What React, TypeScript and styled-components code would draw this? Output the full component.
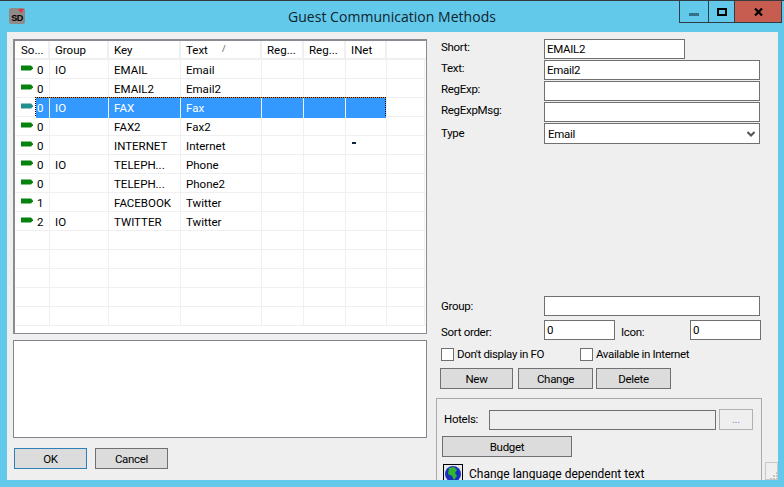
import React from "react";
import styled, { createGlobalStyle } from "styled-components";

const GlobalStyle = createGlobalStyle`
  html, body {
    margin: 0;
    padding: 0;
    background: #63c9eb;
  }
  * {
    box-sizing: border-box;
  }
`;

const columns = "35px 59px 72px 81px 42px 42px 41px 38px";

const rows = [
  { sort: "0", group: "IO", key: "EMAIL", text: "Email" },
  { sort: "0", group: "", key: "EMAIL2", text: "Email2" },
  { sort: "0", group: "IO", key: "FAX", text: "Fax", selected: true },
  { sort: "0", group: "", key: "FAX2", text: "Fax2" },
  { sort: "0", group: "", key: "INTERNET", text: "Internet", inet: true },
  { sort: "0", group: "IO", key: "TELEPH...", text: "Phone" },
  { sort: "0", group: "", key: "TELEPH...", text: "Phone2" },
  { sort: "1", group: "", key: "FACEBOOK", text: "Twitter" },
  { sort: "2", group: "IO", key: "TWITTER", text: "Twitter" },
];

const Arrow = ({ color }: { color: string }) => (
  <svg width="12" height="6" viewBox="0 0 12 6">
    <path d="M0 0.5H10L12 2.5V3.5L10 5.5H0Z" fill={color} />
  </svg>
);

function App() {
  return (
    <Window>
      <GlobalStyle />
      <TitleBar>
        <AppIcon>
          SD
          <svg width="6" height="4" viewBox="0 0 6 4">
            <path d="M0 0H6L3 4Z" fill="#e0304a" />
          </svg>
        </AppIcon>
        <Title>Guest Communication Methods</Title>
        <Controls>
          <ControlButton>
            <MinimizeIcon width="10" height="3" viewBox="0 0 10 3">
              <rect width="10" height="3" fill="#34708a" />
            </MinimizeIcon>
          </ControlButton>
          <ControlButton $w={26}>
            <svg width="10" height="8" viewBox="0 0 10 8">
              <rect x="1" y="1" width="8" height="6" fill="none" stroke="#000" strokeWidth="2" />
            </svg>
          </ControlButton>
          <ControlButton $w={47} $close>
            <svg width="9" height="8" viewBox="0 0 9 8">
              <path d="M1 0.5L8 7.5M8 0.5L1 7.5" stroke="#000" strokeWidth="2.2" />
            </svg>
          </ControlButton>
        </Controls>
      </TitleBar>
      <Client>
        <LeftColumn>
          <Grid>
            <HeaderRow>
              <HeaderCell>So...</HeaderCell>
              <HeaderCell>Group</HeaderCell>
              <HeaderCell>Key</HeaderCell>
              <HeaderCell>
                Text
                <SortMark>/</SortMark>
              </HeaderCell>
              <HeaderCell>Reg...</HeaderCell>
              <HeaderCell>Reg...</HeaderCell>
              <HeaderCell>INet</HeaderCell>
            </HeaderRow>
            {rows.map((r, i) => (
              <Row key={i}>
                <SortCell>
                  <ArrowSlot>
                    <Arrow color={r.selected ? "#1f8f8f" : "#08820f"} />
                  </ArrowSlot>
                  <SortValue $selected={r.selected}>{r.sort}</SortValue>
                </SortCell>
                <Cell $selected={r.selected}>{r.group}</Cell>
                <Cell $selected={r.selected}>{r.key}</Cell>
                <Cell $selected={r.selected}>{r.text}</Cell>
                <Cell $selected={r.selected} />
                <Cell $selected={r.selected} />
                <Cell $selected={r.selected}>{r.inet && <InetMark />}</Cell>
                <Cell />
                {r.selected && <FocusFrame />}
              </Row>
            ))}
            {Array.from({ length: 5 }).map((_, i) => (
              <Row key={i}>
                {Array.from({ length: 8 }).map((_, j) => (
                  <Cell key={j} />
                ))}
              </Row>
            ))}
          </Grid>
          <Memo />
          <DialogButtons>
            <Button $default>OK</Button>
            <Button>Cancel</Button>
          </DialogButtons>
        </LeftColumn>
        <RightColumn>
          <FieldGrid>
            <FieldLabel>Short:</FieldLabel>
            <TextBox $w={141} readOnly value="EMAIL2" />
            <FieldLabel>Text:</FieldLabel>
            <TextBox readOnly value="Email2" />
            <FieldLabel>RegExp:</FieldLabel>
            <TextBox readOnly value="" />
            <FieldLabel>RegExpMsg:</FieldLabel>
            <TextBox readOnly value="" />
            <TypeLabel>Type</TypeLabel>
            <ComboBox>
              Email
              <svg width="8" height="6" viewBox="0 0 8 6">
                <path d="M0.5 1L4 4.5L7.5 1" fill="none" stroke="#555" strokeWidth="2" />
              </svg>
            </ComboBox>
          </FieldGrid>
          <LowerFields>
            <GroupRow>
              <FieldLabel>Group:</FieldLabel>
              <TextBox readOnly value="" />
            </GroupRow>
            <SortRow>
              <FieldLabel>Sort order:</FieldLabel>
              <SmallBox readOnly value="0" />
              <IconLabel>Icon:</IconLabel>
              <SmallBox readOnly value="0" />
            </SortRow>
            <CheckRow>
              <CheckLabel $w={139}>
                <CheckBox />
                Don't display in FO
              </CheckLabel>
              <CheckLabel>
                <CheckBox />
                Available in Internet
              </CheckLabel>
            </CheckRow>
            <ActionRow>
              <Button>New</Button>
              <Button $w={75}>Change</Button>
              <Button $w={75}>Delete</Button>
            </ActionRow>
          </LowerFields>
          <GroupBox>
            <HotelRow>
              <FieldLabel>Hotels:</FieldLabel>
              <DisabledBox />
              <EllipsisButton>...</EllipsisButton>
            </HotelRow>
            <Button $w={130}>Budget</Button>
            <LanguageRow>
              <GlobeButton>
                <svg width="16" height="16" viewBox="0 0 16 16">
                  <circle cx="8" cy="8" r="8" fill="#1a2fc0" />
                  <path d="M4 2L9 1L12 4L10 7L12 10L9 14L7 10L3 8Z" fill="#2fb52f" />
                </svg>
              </GlobeButton>
              Change language dependent text
            </LanguageRow>
          </GroupBox>
        </RightColumn>
        <ResizeGrip>
          <svg width="8" height="8" viewBox="0 0 8 8">
            <path d="M6 0h2v2H6zM3 3h2v2H3zM6 3h2v2H6zM0 6h2v2H0zM3 6h2v2H3zM6 6h2v2H6z" fill="#c4c4c4" />
          </svg>
        </ResizeGrip>
      </Client>
    </Window>
  );
}

export default App;

const Window = styled.div`
  width: 784px;
  height: 487px;
  overflow: hidden;
  display: flex;
  flex-direction: column;
  background: #63c9eb;
  border-top: 1px solid #333b40;
  font-family: Roboto, "Liberation Sans", Arial, sans-serif;
  font-size: 11.5px;
  color: #000;
`;

const TitleBar = styled.div`
  position: relative;
  flex: 0 0 31px;
  display: flex;
  justify-content: center;
  padding-top: 6px;
`;

const AppIcon = styled.div`
  position: absolute;
  left: 9px;
  top: 7px;
  width: 16px;
  height: 16px;
  border-radius: 2px;
  background: #8f8a88;
  font-family: "Liberation Sans", sans-serif;
  font-size: 9px;
  font-weight: bold;
  line-height: 20px;
  text-align: center;
  letter-spacing: -0.5px;
  svg {
    position: absolute;
    right: 1px;
    top: 1px;
  }
`;

const Title = styled.div`
  font-family: "Open Sans", sans-serif;
  font-size: 14px;
  line-height: 20px;
  letter-spacing: 0.03px;
  color: #10232c;
`;

const Controls = styled.div`
  position: absolute;
  top: 0;
  left: 679px;
  display: flex;
  height: 22px;
  border: 1px solid #2d3c45;
  border-top: none;
`;

const ControlButton = styled.div<{ $w?: number; $close?: boolean }>`
  width: ${(p) => p.$w ?? 28}px;
  display: flex;
  align-items: center;
  justify-content: center;
  background: ${(p) => (p.$close ? "#c75c50" : "transparent")};
  border-left: 1px solid #2d3c45;
  &:first-child {
    border-left: none;
  }
`;

const MinimizeIcon = styled.svg`
  margin-top: 5px;
`;

const Client = styled.div`
  position: relative;
  flex: 0 0 448px;
  margin: 0 6px 0 7px;
  display: flex;
  background: #efefef;
  overflow: hidden;
`;

const LeftColumn = styled.div`
  width: 420px;
  padding: 7px 0 0 6px;
`;

const Grid = styled.div`
  width: 414px;
  height: 295px;
  overflow: hidden;
  background: #fff;
  border: 2px solid #8a8a92;
  border-right-width: 1px;
  border-bottom-width: 1px;
`;

const HeaderRow = styled.div`
  display: grid;
  grid-template-columns: 35px 59px 72px 81px 42px 42px 41px;
  height: 19px;
  border-bottom: 2px solid #f0f0f0;
`;

const HeaderCell = styled.div`
  position: relative;
  padding-left: 5px;
  line-height: 19px;
  white-space: nowrap;
  border-right: 2px solid #f0f0f0;
  &:first-child {
    padding-left: 6px;
  }
`;

const SortMark = styled.span`
  position: absolute;
  left: 41px;
  top: -1px;
  font-size: 9px;
  color: #555;
`;

const Row = styled.div`
  position: relative;
  display: grid;
  grid-template-columns: ${columns};
  height: 19px;
  border-bottom: 1px solid #f0f0f0;
`;

const Cell = styled.div<{ $selected?: boolean }>`
  padding-left: 5px;
  line-height: 20px;
  white-space: nowrap;
  overflow: hidden;
  border-right: 1px solid #f0f0f0;
  background: ${(p) => (p.$selected ? "#3399ff" : "transparent")};
  color: ${(p) => (p.$selected ? "#fff" : "#000")};
`;

const SortCell = styled.div`
  display: flex;
  align-items: stretch;
  border-right: 1px solid #f0f0f0;
`;

const ArrowSlot = styled.div`
  flex: 0 0 21px;
  padding: 5px 0 0 6px;
  line-height: 0;
`;

const SortValue = styled.div<{ $selected?: boolean }>`
  flex: 1;
  line-height: 20px;
  padding-left: 1px;
  background: ${(p) => (p.$selected ? "#3399ff" : "transparent")};
  color: ${(p) => (p.$selected ? "#fff" : "#000")};
`;

const FocusFrame = styled.div`
  position: absolute;
  left: 20px;
  top: -1px;
  width: 351px;
  height: 19px;
  border-top: 1px dotted #000;
  border-left: 1px dotted #000;
  border-right: 1px dotted #000;
  background: linear-gradient(#e8901a, #e8901a) top / 100% 1px no-repeat;
  background-origin: border-box;
`;

const InetMark = styled.span`
  display: block;
  width: 4px;
  height: 2px;
  margin: 6px 0 0 1px;
  background: #10233c;
`;

const Memo = styled.div`
  width: 414px;
  height: 98px;
  margin-top: 6px;
  background: #fff;
  border: 1px solid #84848c;
`;

const DialogButtons = styled.div`
  display: flex;
  gap: 8px;
  margin: 10px 0 0 1px;
`;

const Button = styled.div<{ $w?: number; $default?: boolean }>`
  width: ${(p) => p.$w ?? 73}px;
  height: 21px;
  line-height: 21px;
  text-align: center;
  letter-spacing: -0.3px;
  background: #dcdcdc;
  border: 1px solid ${(p) => (p.$default ? "#2f7fb8" : "#707070")};
`;

const RightColumn = styled.div`
  flex: 1;
  padding: 7px 0 0 9px;
  display: flex;
  flex-direction: column;
  letter-spacing: -0.3px;
`;

const FieldGrid = styled.div`
  display: grid;
  grid-template-columns: 103px 216px;
  grid-auto-rows: 20px;
  row-gap: 1px;
  margin-left: 5px;
`;

const FieldLabel = styled.div`
  line-height: 16px;
  white-space: nowrap;
`;

const TypeLabel = styled(FieldLabel)`
  padding-top: 2px;
`;

const TextBox = styled.input<{ $w?: number }>`
  width: ${(p) => (p.$w ? `${p.$w}px` : "100%")};
  height: 20px;
  padding: 0 2px;
  margin: 0;
  border: 1px solid #707070;
  border-radius: 0;
  outline: none;
  background: #fff;
  font: inherit;
  letter-spacing: inherit;
  color: #000;
`;

const ComboBox = styled.div`
  height: 21px;
  padding: 0 4px 0 3px;
  display: flex;
  align-items: center;
  justify-content: space-between;
  background: #fff;
  border: 1px solid #707070;
`;

const LowerFields = styled.div`
  margin-top: 153px;
  margin-left: 0;
`;

const GroupRow = styled.div`
  display: grid;
  grid-template-columns: 103px 216px;
  margin-left: 5px;
  ${FieldLabel} {
    padding-top: 2px;
  }
`;

const SortRow = styled.div`
  display: grid;
  grid-template-columns: 103px 71px 75px 71px;
  margin: 4px 0 0 5px;
  ${FieldLabel} {
    padding-top: 4px;
  }
`;

const IconLabel = styled(FieldLabel)`
  padding-left: 6px;
`;

const SmallBox = styled(TextBox)`
  height: 20px;
`;

const CheckRow = styled.div`
  display: flex;
  margin: 6px 0 0 5px;
  padding-top: 1px;
`;

const CheckLabel = styled.div<{ $w?: number }>`
  display: flex;
  align-items: center;
  gap: 3px;
  height: 14px;
  letter-spacing: -0.35px;
  white-space: nowrap;
  ${(p) => (p.$w ? `width: ${p.$w}px;` : "")}
`;

const CheckBox = styled.span`
  flex: 0 0 13px;
  height: 13px;
  background: #fff;
  border: 1px solid #707070;
`;

const ActionRow = styled.div`
  display: flex;
  gap: 3px;
  margin: 7px 0 0 4px;
  ${Button}:first-child {
    margin-right: 2px;
  }
`;

const GroupBox = styled.div`
  width: 326px;
  height: 100px;
  margin-top: 9px;
  padding: 10px 6px 0 5px;
  border: 1px solid #a9a9a9;
`;

const HotelRow = styled.div`
  display: flex;
  align-items: center;
  margin-bottom: 6px;
  ${FieldLabel} {
    width: 47px;
    padding: 0 0 2px 2px;
  }
`;

const DisabledBox = styled.div`
  width: 227px;
  height: 20px;
  background: #efefef;
  border: 1px solid #707070;
`;

const EllipsisButton = styled.div`
  width: 34px;
  height: 21px;
  margin-left: 3px;
  border: 1px solid #b0b0b0;
  line-height: 19px;
  text-align: center;
  color: #9a7fc0;
`;

const LanguageRow = styled.div`
  display: flex;
  align-items: flex-start;
  gap: 6px;
  margin: 7px 0 0 1px;
  font-size: 12px;
  line-height: 21px;
  letter-spacing: 0;
  white-space: nowrap;
`;

const GlobeButton = styled.div`
  width: 20px;
  height: 20px;
  display: flex;
  align-items: center;
  justify-content: center;
  background: #e8e8e8;
  border: 1px solid #000;
`;

const ResizeGrip = styled.div`
  position: absolute;
  right: 0;
  bottom: 0;
  width: 13px;
  height: 18px;
  padding: 9px 0 0 4px;
  border: 1px solid #c8c8c8;
  line-height: 0;
`;
